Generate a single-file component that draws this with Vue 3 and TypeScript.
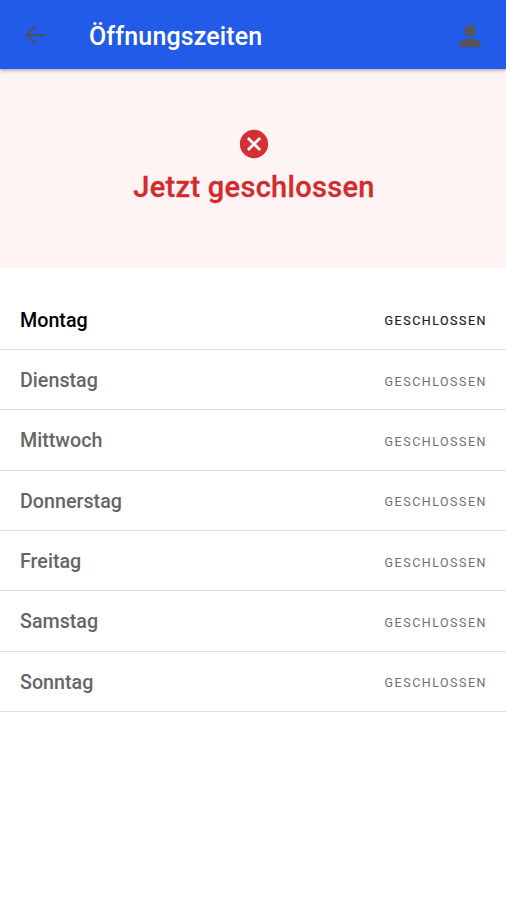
<script setup lang="ts">
interface Day {
  name: string
  status: string
  today?: boolean
}

const days: Day[] = [
  { name: 'Montag', status: 'Geschlossen', today: true },
  { name: 'Dienstag', status: 'Geschlossen' },
  { name: 'Mittwoch', status: 'Geschlossen' },
  { name: 'Donnerstag', status: 'Geschlossen' },
  { name: 'Freitag', status: 'Geschlossen' },
  { name: 'Samstag', status: 'Geschlossen' },
  { name: 'Sonntag', status: 'Geschlossen' },
]
</script>

<template>
  <div class="page">
    <header class="bar">
      <svg class="back" viewBox="0 0 24 24"><path d="M20 12H5.6M12.400 4.800L5.300 12l7.100 7.200" /></svg>
      <h1 class="title">Öffnungszeiten</h1>
      <svg class="user" viewBox="0 0 24 24"><path d="M12 12c2.21 0 4-1.79 4-4s-1.79-4-4-4-4 1.79-4 4 1.79 4 4 4zm0 2c-2.67 0-8 1.34-8 4v2h16v-2c0-2.66-5.33-4-8-4z" /></svg>
    </header>
    <section class="banner">
      <svg class="cross" viewBox="0 0 24 24"><path d="M12 2C6.47 2 2 6.47 2 12s4.47 10 10 10 10-4.47 10-10S17.53 2 12 2zm5 13.59L15.59 17 12 13.41 8.41 17 7 15.59 10.59 12 7 8.41 8.41 7 12 10.59 15.59 7 17 8.41 13.41 12 17 15.59z" /></svg>
      <p class="state">Jetzt geschlossen</p>
    </section>
    <ul class="days">
      <li v-for="day in days" :key="day.name" class="day" :class="{ today: day.today }">
        <span class="name">{{ day.name }}</span>
        <span class="status">{{ day.status }}</span>
      </li>
    </ul>
  </div>
</template>

<style>
body {
  margin: 0;
  background: #fff;
}
</style>

<style scoped>
.page {
  height: 900px;
  overflow: hidden;
  background: #fff;
  font-family: Roboto, sans-serif;
}
.bar {
  position: relative;
  display: flex;
  align-items: center;
  box-sizing: border-box;
  height: 69px;
  padding: 3px 20px 0 20px;
  background: #225be8;
  box-shadow: 0 1px 4px rgba(0, 0, 0, 0.4);
}
.back {
  width: 30px;
  height: 30px;
  margin-top: -2px;
  fill: none;
  stroke: #504f62;
  stroke-width: 1.7;
}
.title {
  flex: 1;
  margin: 2px 0 0 39px;
  font-size: 25px;
  line-height: 32px;
  font-weight: 500;
  letter-spacing: 0.14px;
  color: #fff;
}
.user {
  width: 32px;
  height: 32px;
  fill: #5a554f;
}
.banner {
  display: flex;
  flex-direction: column;
  align-items: center;
  box-sizing: border-box;
  height: 199px;
  padding: 58px 0 0 2px;
  background: #fff4f4;
}
.cross {
  width: 34px;
  height: 34px;
  fill: #d13034;
}
.state {
  margin: 8px 0 0;
  font-size: 29px;
  line-height: 36px;
  font-weight: 500;
  letter-spacing: 0.3px;
  color: #d32b2d;
  -webkit-text-stroke: 0.3px #d32b2d;
}
.days {
  margin: 0;
  padding: 21.5px 0 0;
  list-style: none;
}
.day {
  display: flex;
  align-items: center;
  justify-content: space-between;
  box-sizing: border-box;
  height: 60.35px;
  padding: 2px 19px 0 20px;
  border-bottom: 1px solid #dedede;
  color: #666;
}
.name {
  font-size: 19.7px;
  font-weight: 500;
}
.status {
  padding-top: 1px;
  font-size: 12.5px;
  letter-spacing: 1.5px;
  text-transform: uppercase;
  color: #707070;
}
.today .name {
  color: #000;
}
.today .status {
  color: #222;
  -webkit-text-stroke: 0.2px #222;
}
</style>
